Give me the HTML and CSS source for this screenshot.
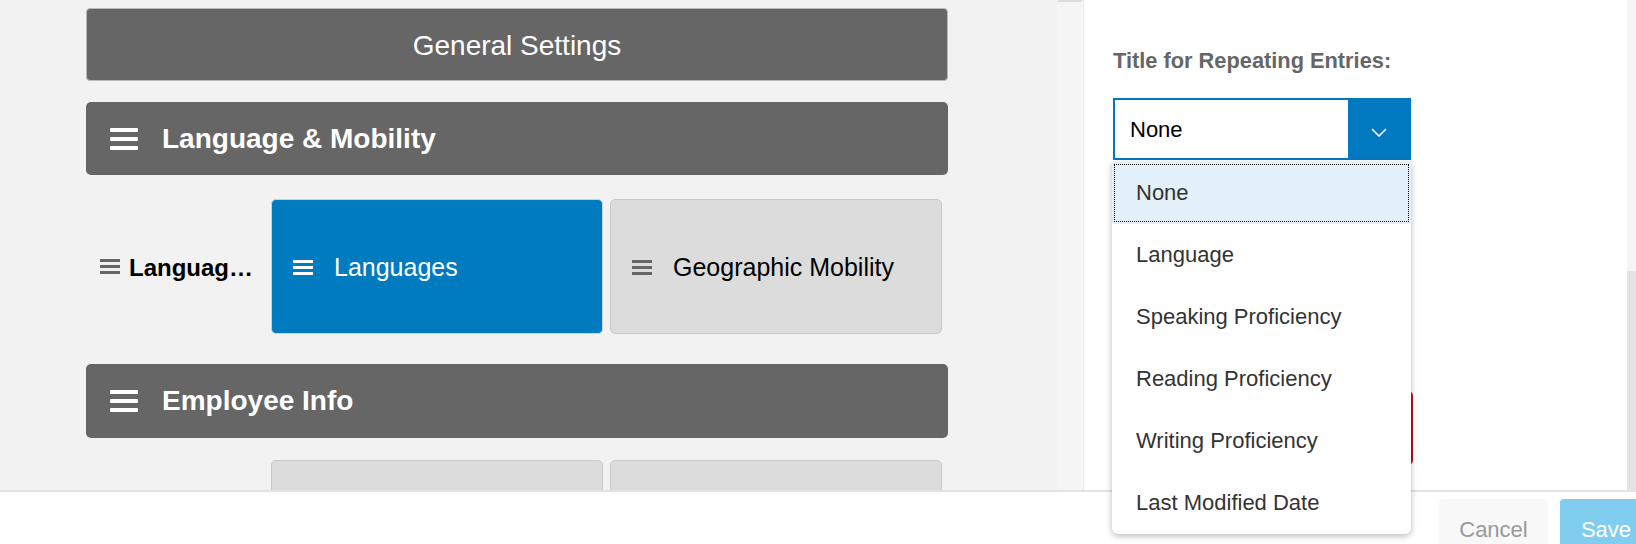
FILE: index.html
```html
<!DOCTYPE html>
<html lang="en">
<head>
    <meta charset="UTF-8">
    <meta name="viewport" content="width=device-width, initial-scale=1.0">
    <title>Portlet Layout</title>
    <link rel="stylesheet" href="styles.css">
</head>
<body>
    <div class="app">
        <main class="main">
            <section class="workspace">
                <div class="canvas">
                    <div class="general-box">General Settings</div>

                    <div class="group-head">
                        <svg class="grip grip-lg" viewBox="0 0 28 22"><rect y="0" width="28" height="4" rx="1"/><rect y="9" width="28" height="4" rx="1"/><rect y="18" width="28" height="4" rx="1"/></svg>
                        <span>Language &amp; Mobility</span>
                    </div>

                    <div class="row">
                        <div class="row-label" title="Language &amp; Mobility">
                            <svg class="grip grip-sm" viewBox="0 0 20 15"><rect y="0" width="20" height="3"/><rect y="6" width="20" height="3"/><rect y="12" width="20" height="3"/></svg>
                            <span class="row-title">Languag…</span>
                        </div>
                        <div class="card active">
                            <svg class="grip grip-sm" viewBox="0 0 20 15"><rect y="0" width="20" height="3"/><rect y="6" width="20" height="3"/><rect y="12" width="20" height="3"/></svg>
                            <span>Languages</span>
                        </div>
                        <div class="card">
                            <svg class="grip grip-sm" viewBox="0 0 20 15"><rect y="0" width="20" height="3"/><rect y="6" width="20" height="3"/><rect y="12" width="20" height="3"/></svg>
                            <span>Geographic Mobility</span>
                        </div>
                    </div>

                    <div class="group-head">
                        <svg class="grip grip-lg" viewBox="0 0 28 22"><rect y="0" width="28" height="4" rx="1"/><rect y="9" width="28" height="4" rx="1"/><rect y="18" width="28" height="4" rx="1"/></svg>
                        <span>Employee Info</span>
                    </div>

                    <div class="row">
                        <div class="row-label"></div>
                        <div class="card"></div>
                        <div class="card"></div>
                    </div>
                </div>
                <div class="canvas-scroll"><div class="canvas-thumb"></div></div>
            </section>

            <aside class="props">
                <div class="props-body">
                    <div class="field-label">Title for Repeating Entries:</div>
                    <div class="select-wrap">
                        <div class="select">
                            <span class="select-value">None</span>
                            <span class="select-btn">
                                <svg width="16" height="9" viewBox="0 0 16 9"><polyline points="1,1 8,8 15,1" fill="none" stroke="#fff" stroke-width="1.6"/></svg>
                            </span>
                        </div>
                        <ul class="dropdown">
                            <li class="selected">None</li>
                            <li>Language</li>
                            <li>Speaking Proficiency</li>
                            <li>Reading Proficiency</li>
                            <li>Writing Proficiency</li>
                            <li>Last Modified Date</li>
                        </ul>
                    </div>
                    <button class="danger-btn" aria-label="Delete"></button>
                </div>
                <div class="props-scroll"><div class="props-thumb"></div></div>
            </aside>
        </main>

        <footer class="footer">
            <button class="btn btn-cancel">Cancel</button>
            <button class="btn btn-save">Save</button>
        </footer>
    </div>
</body>
</html>
```

FILE: styles.css
```css
body {
    margin: 0;
    padding: 0;
    font-family: 'Liberation Sans', Arial, sans-serif;
    color: #000;
    overflow: hidden;
}

.app {
    width: 1636px;
    height: 544px;
    display: flex;
    flex-direction: column;
    overflow: hidden;
}

.main {
    height: 490px;
    display: flex;
}

/* left canvas */
.workspace {
    display: flex;
    flex: none;
    width: 1083px;
}

.canvas {
    width: 1057px;
    background-color: #f2f2f2;
    padding: 8px 0 0 86px;
    box-sizing: border-box;
    overflow: hidden;
}

.canvas > * {
    width: 862px;
    box-sizing: border-box;
}

.canvas-scroll {
    width: 26px;
    background-color: #f5f5f5;
}

.canvas-thumb {
    height: 2px;
    margin: 0 1px;
    background-color: #dcdcdc;
}

.general-box {
    height: 73px;
    margin-bottom: 21px;
    padding-top: 3px;
    background-color: #666;
    border: 1px solid #b9b9b9;
    border-radius: 4px;
    color: #fff;
    font-size: 28px;
    display: flex;
    align-items: center;
    justify-content: center;
}

.group-head {
    height: 73px;
    margin-bottom: 24px;
    padding-left: 24px;
    background-color: #666;
    border-radius: 5px;
    color: #fff;
    font-size: 28px;
    font-weight: bold;
    display: flex;
    align-items: center;
    gap: 24px;
}

.group-head + .row + .group-head {
    height: 74px;
    margin-bottom: 22px;
}

.grip {
    flex: none;
}

.grip-lg {
    width: 28px;
    height: 22px;
    fill: #fff;
}

.grip-sm {
    width: 20px;
    height: 15px;
    fill: #fff;
}

.row {
    height: 135px;
    margin-bottom: 30px;
    display: flex;
    gap: 7px;
}

.row-label {
    width: 178px;
    flex: none;
    padding-left: 14px;
    box-sizing: border-box;
    display: flex;
    align-items: center;
    gap: 9px;
}

.row-label .grip-sm {
    fill: #666;
}

.row-title {
    font-size: 24px;
    font-weight: bold;
    white-space: nowrap;
    padding-top: 2px;
}

.card {
    width: 332px;
    height: 135px;
    flex: none;
    box-sizing: border-box;
    padding: 2px 0 0 21px;
    background-color: #dcdcdc;
    border: 1px solid #c9c9c9;
    border-radius: 5px;
    font-size: 25px;
    display: flex;
    align-items: center;
    gap: 21px;
}

.card .grip-sm {
    fill: #666;
}

.card.active {
    background-color: #007bc0;
    border-color: #d0d0d0;
    color: #fff;
}

.card.active .grip-sm {
    fill: #fff;
}

/* right properties panel */
.props {
    flex: 1;
    display: flex;
    position: relative;
    background-color: #fff;
    border-left: 1px solid #ececec;
}

.props-body {
    flex: 1;
    padding: 48px 0 0 29px;
}

.field-label {
    color: #666;
    font-size: 21.8px;
    font-weight: bold;
    line-height: 26px;
}

.select-wrap {
    position: relative;
    width: 298px;
    margin-top: 24px;
}

.select {
    height: 62px;
    box-sizing: border-box;
    border: 2px solid #0079c1;
    display: flex;
    align-items: stretch;
}

.select-value {
    flex: 1;
    padding: 2px 0 0 15px;
    font-size: 22px;
    display: flex;
    align-items: center;
}

.select-btn {
    width: 61px;
    background-color: #0079c1;
    display: flex;
    align-items: center;
    justify-content: center;
    padding-top: 6px;
    box-sizing: border-box;
}

.dropdown {
    position: absolute;
    top: 64px;
    left: -1px;
    width: 299px;
    margin: 0;
    padding: 0;
    list-style: none;
    background-color: #fff;
    border-radius: 0 0 6px 6px;
    box-shadow: 0 2px 6px rgba(0, 0, 0, 0.28);
    z-index: 10;
}

.dropdown li {
    height: 62px;
    padding-left: 24px;
    color: #333;
    font-size: 22px;
    display: flex;
    align-items: center;
    box-sizing: border-box;
}

.dropdown li.selected {
    background-color: #e4f0f9;
    outline: 1px dotted #000;
    outline-offset: -3px;
}

.danger-btn {
    display: block;
    width: 300px;
    height: 74px;
    margin-top: 231px;
    border: none;
    border-radius: 5px;
    background-color: #b5121b;
}

.props-scroll {
    width: 9px;
    background-color: #f5f5f5;
    display: flex;
    flex-direction: column;
    justify-content: flex-end;
}

.props-thumb {
    height: 219px;
    background-color: #e3e3e3;
}

/* footer */
.footer {
    flex: 1;
    border-top: 2px solid #e3e3e3;
    background-color: #fff;
    padding-top: 7px;
    display: flex;
    justify-content: flex-end;
    gap: 12px;
}

.btn {
    width: 109px;
    height: 62px;
    flex: none;
    border: none;
    border-radius: 4px;
    font-family: 'Liberation Sans', Arial, sans-serif;
    font-size: 22px;
    padding: 0;
}

.btn-cancel {
    background-color: #f8f8f8;
    color: #999;
}

.btn-save {
    width: 92px;
    margin-right: -16px;
    background-color: #80cdef;
    color: #fff;
}
```
